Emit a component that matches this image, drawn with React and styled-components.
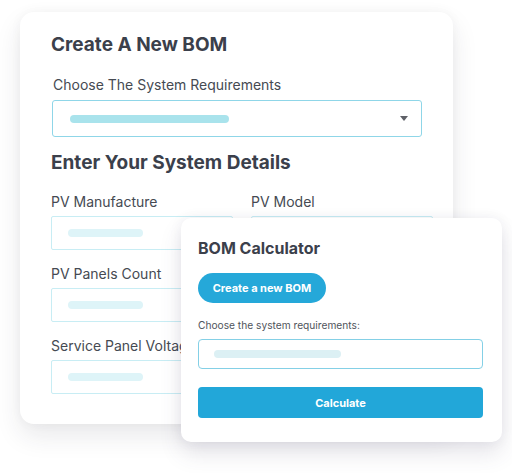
import React from "react";
import styled, { createGlobalStyle } from "styled-components";

const GlobalStyle = createGlobalStyle`
    body {
        margin: 0;
        background: #ffffff;
        font-family: Inter, "Noto Sans", sans-serif;
    }
`;

function App() {
    const fields = ["PV Manufacture", "PV Model", "PV Panels Count", "", "Service Panel Voltage", ""];
    return (
        <Stage>
            <GlobalStyle />
            <BackCard>
                <Heading>Create A New BOM</Heading>
                <SelectLabel>Choose The System Requirements</SelectLabel>
                <SelectBox>
                    <Bar width={159} color="#a9e3ec" />
                    <Caret />
                </SelectBox>
                <Heading>Enter Your System Details</Heading>
                <FieldGrid>
                    {fields.map((label, i) => (
                        <Field key={i}>
                            <FieldLabel>{label || "\u00a0"}</FieldLabel>
                            <FieldBox>
                                <Bar width={75} color="#def4f8" />
                            </FieldBox>
                        </Field>
                    ))}
                </FieldGrid>
            </BackCard>
            <FrontCard>
                <SmallHeading>BOM Calculator</SmallHeading>
                <PillButton>Create a new BOM</PillButton>
                <SmallLabel>Choose the system requirements:</SmallLabel>
                <InputBox>
                    <Bar width={127} color="#dcf0f4" />
                </InputBox>
                <WideButton>Calculate</WideButton>
            </FrontCard>
        </Stage>
    );
}

const Stage = styled.div`
    position: relative;
    width: 512px;
    height: 473px;
    overflow: hidden;
    padding-top: 12px;
    padding-left: 20px;
    box-sizing: border-box;
`;
const BackCard = styled.div`
    width: 433px;
    height: 412px;
    box-sizing: border-box;
    padding: 21px 0 0 31px;
    background: #fff;
    border-radius: 14px;
    box-shadow: 0 12px 26px rgba(40, 40, 60, 0.1), 0 0 12px rgba(40, 40, 60, 0.04);
`;
const Heading = styled.div`
    font-size: 19px;
    line-height: 24px;
    font-weight: 700;
    color: #3b404b;
`;
const SelectLabel = styled.div`
    margin: 19px 0 0 2px;
    font-size: 14px;
    line-height: 18px;
    color: #454a52;
`;
const SelectBox = styled.div`
    display: flex;
    align-items: center;
    justify-content: space-between;
    margin: 6px 0 14px 1px;
    width: 370px;
    height: 37px;
    box-sizing: border-box;
    padding: 0 13px 0 17px;
    border: 1px solid #8fd6e8;
    border-radius: 3px;
`;
const Bar = styled.div`
    width: ${(props) => props.width}px;
    height: 8px;
    border-radius: 4px;
    background: ${(props) => props.color};
`;
const Caret = styled.div`
    width: 0;
    height: 0;
    border-left: 4.5px solid transparent;
    border-right: 4.5px solid transparent;
    border-top: 5px solid #5f6168;
`;
const FieldGrid = styled.div`
    display: grid;
    grid-template-columns: 182px 182px;
    column-gap: 18px;
    row-gap: 15px;
    margin-top: 18px;
`;
const Field = styled.div`
    display: flex;
    flex-direction: column;
`;
const FieldLabel = styled.div`
    font-size: 14px;
    line-height: 18px;
    color: #454a52;
    white-space: nowrap;
`;
const FieldBox = styled.div`
    display: flex;
    align-items: center;
    margin-top: 5px;
    height: 34px;
    box-sizing: border-box;
    padding-left: 16px;
    border: 1px solid #c8edf4;
    border-radius: 2px;
`;
const FrontCard = styled.div`
    position: absolute;
    left: 181px;
    top: 218px;
    width: 321px;
    height: 224px;
    box-sizing: border-box;
    padding: 20px 19px 0 17px;
    background: #fff;
    border-radius: 10px;
    box-shadow: 0 12px 22px rgba(70, 60, 100, 0.13), 0 0 14px rgba(40, 40, 60, 0.06);
    display: flex;
    flex-direction: column;
    align-items: flex-start;
`;
const SmallHeading = styled.div`
    font-size: 16px;
    line-height: 20px;
    font-weight: 700;
    color: #3b404b;
`;
const PillButton = styled.button`
    margin-top: 15px;
    width: 128px;
    height: 30px;
    border: none;
    border-radius: 15px;
    background: #25a8d9;
    color: #fff;
    font-family: Inter, sans-serif;
    font-size: 11px;
    font-weight: 700;
    padding: 0;
`;
const SmallLabel = styled.div`
    margin-top: 16px;
    font-size: 10.2px;
    line-height: 13px;
    color: #4f545c;
`;
const InputBox = styled.div`
    display: flex;
    align-items: center;
    margin-top: 7px;
    width: 100%;
    height: 30px;
    box-sizing: border-box;
    padding-left: 15px;
    border: 1px solid #84d0e6;
    border-radius: 4px;
`;
const WideButton = styled.button`
    margin-top: 18px;
    width: 100%;
    height: 31px;
    border: none;
    border-radius: 4px;
    background: #22a7d9;
    color: #fff;
    font-family: Inter, sans-serif;
    font-size: 11px;
    font-weight: 700;
    padding: 0;
`;

export default App;
